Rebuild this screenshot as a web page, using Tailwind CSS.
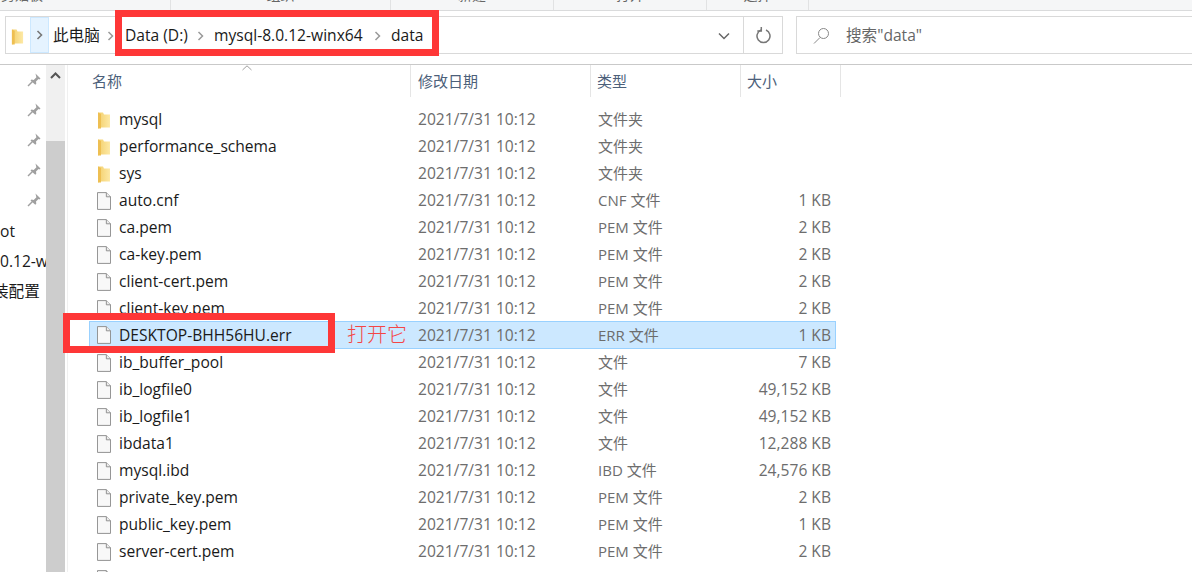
<!DOCTYPE html>
<html lang="zh-CN">
<head>
    <meta charset="UTF-8">
    <meta name="viewport" content="width=device-width, initial-scale=1.0">
    <title>data</title>
    <script src="https://cdn.jsdelivr.net/npm/@tailwindcss/browser@4"></script>
</head>
<body class="bg-white">
<svg width="0" height="0" class="absolute">
    <defs>
        <linearGradient id="fold" x1="0" y1="0" x2="1" y2="0"><stop offset="0" stop-color="#f3cf6b"/><stop offset="1" stop-color="#fde9a6"/></linearGradient>
        <symbol id="folder" viewBox="0 0 14 18">
            <path d="M1 1.500h5l1 2h6v13H3.500L1 17.500z" fill="url(#fold)"/>
            <path d="M1 1.500l3 1.500v14.500l-3 0z" fill="#eebf52"/>
        </symbol>
        <symbol id="file" viewBox="0 0 15 19">
            <path d="M.5.5h9.500l4.500 4.500v13.500H.5z" fill="#f8f8f8" stroke="#8a8a8a"/>
            <path d="M10 .5v4.500h4.500" fill="#ececec" stroke="#8a8a8a"/>
        </symbol>
        <symbol id="pin" viewBox="0 0 14 14">
            <path d="M8.500 .5l5 5-1 .9-1-.3-2.500 2.500.3 2.200-1 1L3.500 7.600l1-1 2.200.3L9.400 4.200l-.3-1z" fill="#a0a0a0"/>
            <path d="M5.500 8.500L1 13" stroke="#a0a0a0" stroke-width="1.500"/>
        </symbol>
    </defs>
</svg>
<div class="relative w-[1192px] h-[572px] overflow-hidden font-['Open_Sans','Noto_Sans_CJK_SC',sans-serif] text-[15.6px]">

    <!-- ribbon, only the bottom of the group labels is visible -->
    <div class="h-[11px] bg-[#f5f6f7] border-b border-[#dadbdc] flex items-start overflow-hidden text-[14px] leading-[18px] text-[#666]">
        <div class="w-[171px] h-[10px] shrink-0 border-r border-[#e1e2e3] pl-[1px]"><span class="block -mt-[14px]">剪贴板</span></div>
        <div class="w-[220px] h-[10px] shrink-0 border-r border-[#e1e2e3] text-center"><span class="block -mt-[14px]">组织</span></div>
        <div class="w-[163px] h-[10px] shrink-0 border-r border-[#e1e2e3] text-center"><span class="block -mt-[14px]">新建</span></div>
        <div class="w-[153px] h-[10px] shrink-0 border-r border-[#e1e2e3] text-center"><span class="block -mt-[14px]">打开</span></div>
        <div class="w-[102px] h-[10px] shrink-0 border-r border-[#e1e2e3] text-center"><span class="block -mt-[14px]">选择</span></div>
    </div>

    <!-- address + search -->
    <div class="h-[54px] bg-white border-b border-[#c9c9c9] flex items-start pt-[5px] pl-[5px]">
        <div class="w-[778px] h-[38px] border border-[#d9d9d9] flex items-center shrink-0">
            <svg class="w-[13px] h-[17px] ml-[5px] mt-[2px] shrink-0"><use href="#folder"/></svg>
            <div class="w-[19px] h-[36px] ml-[6px] bg-[#e5f3ff] border border-[#cce8ff] flex items-center justify-center shrink-0">
                <svg width="7" height="10" viewBox="0 0 7 10" fill="none" stroke="#777" stroke-width="1.600"><path d="M1.500 1l4 4-4 4"/></svg>
            </div>
            <span class="ml-[4px] pt-[2px] text-[#1a1a1a] w-[54px] shrink-0">此电脑</span>
            <svg class="mt-[2px] shrink-0" width="7" height="10" viewBox="0 0 7 10" fill="none" stroke="#999" stroke-width="1.500"><path d="M1.500 1l4 4-4 4"/></svg>
            <span class="ml-[11px] pt-[2px] text-[#1a1a1a] w-[72px] shrink-0">Data (D:)</span>
            <svg class="mt-[2px] shrink-0" width="7" height="10" viewBox="0 0 7 10" fill="none" stroke="#999" stroke-width="1.500"><path d="M1.500 1l4 4-4 4"/></svg>
            <span class="ml-[10px] pt-[2px] text-[#1a1a1a] w-[160px] shrink-0 whitespace-nowrap">mysql-8.0.12-winx64</span>
            <svg class="mt-[2px] shrink-0" width="7" height="10" viewBox="0 0 7 10" fill="none" stroke="#999" stroke-width="1.500"><path d="M1.500 1l4 4-4 4"/></svg>
            <span class="ml-[10px] pt-[2px] text-[#1a1a1a]">data</span>
            <svg class="ml-auto mr-[13px] mt-[2px] shrink-0" width="12" height="8" viewBox="0 0 12 8" fill="none" stroke="#666" stroke-width="1.500"><path d="M1 1.500l5 5 5-5"/></svg>
            <div class="w-[39px] h-[36px] border-l border-[#d9d9d9] flex items-center justify-center shrink-0">
                <svg width="15" height="17" viewBox="0 0 15 17" fill="none" stroke="#777" stroke-width="1.500"><path d="M5 3a6.500 6.500 0 1 0 5 0"/><path d="M5.300 0v4H1.300"/></svg>
            </div>
        </div>
        <div class="ml-[13px] flex-1 h-[38px] border-y border-l border-[#d9d9d9] flex items-center">
            <svg class="ml-[16px] shrink-0" width="17" height="17" viewBox="0 0 17 17" fill="none" stroke="#888" stroke-width="1"><circle cx="10.500" cy="6.500" r="5"/><path d="M7 10.500L1 16.500"/></svg>
            <span class="ml-[16px] pt-[2px] text-[#666] whitespace-nowrap">搜索"data"</span>
        </div>
    </div>

    <div class="flex h-[507px]">
        <!-- nav pane, cut off -->
        <div class="w-[46px] shrink-0 overflow-hidden text-[#1a1a1a] whitespace-nowrap">
            <div class="flex flex-col items-end pr-[5px] pt-[8px] gap-[16px]">
                <svg class="w-[14px] h-[14px]"><use href="#pin"/></svg>
                <svg class="w-[14px] h-[14px]"><use href="#pin"/></svg>
                <svg class="w-[14px] h-[14px]"><use href="#pin"/></svg>
                <svg class="w-[14px] h-[14px]"><use href="#pin"/></svg>
                <svg class="w-[14px] h-[14px]"><use href="#pin"/></svg>
            </div>
            <div class="mt-[9px] h-[30px] leading-[30px]">ot</div>
            <div class="h-[30px] leading-[30px]">0.12-w</div>
            <div class="h-[30px] leading-[30px] -ml-[7px]">装配置</div>
        </div>
        <!-- scrollbar -->
        <div class="w-[19px] shrink-0 bg-[#f0f0f0] flex flex-col">
            <div class="h-[76px] pt-[7px] flex justify-center shrink-0">
                <svg width="11" height="7" viewBox="0 0 11 7" fill="none" stroke="#555" stroke-width="2"><path d="M1 6l4.500-4.500L10 6"/></svg>
            </div>
            <div class="flex-1 bg-[#cdcdcd]"></div>
        </div>
        <div class="w-[3px] shrink-0 border-r border-[#f0f0f0]"></div>

        <!-- file list -->
        <div class="flex-1 min-w-0">
            <div class="relative h-[32px] flex text-[15px] text-[#4c607a]">
                <div class="w-[343px] h-[32px] pl-[24px] border-r border-[#e5e5e5] leading-[33px] shrink-0">名称</div>
                <div class="w-[180px] h-[32px] pl-[7px] border-r border-[#e5e5e5] leading-[33px] shrink-0">修改日期</div>
                <div class="w-[150px] h-[32px] pl-[6px] border-r border-[#e5e5e5] leading-[33px] shrink-0">类型</div>
                <div class="w-[100px] h-[32px] pl-[6px] border-r border-[#e5e5e5] leading-[33px] shrink-0">大小</div>
                <svg class="absolute left-[174px] top-0" width="10" height="6" viewBox="0 0 10 6" fill="none" stroke="#a0a0a0"><path d="M.5 5L5 .8 9.500 5"/></svg>
            </div>
            <div class="pt-[9px] ml-[21px] w-[747px] leading-[27px]">
                <div class="h-[27px] flex items-center pl-[8px]"><svg class="w-[14px] h-[18px] shrink-0"><use href="#folder"/></svg><span class="ml-[8px] w-[299px] text-[#1a1a1a] shrink-0">mysql</span><span class="w-[180px] text-[#6d6d6d] shrink-0">2021/7/31 10:12</span><span class="flex-1 text-[#6d6d6d] text-[15px]">文件夹</span></div>
                <div class="h-[27px] flex items-center pl-[8px]"><svg class="w-[14px] h-[18px] shrink-0"><use href="#folder"/></svg><span class="ml-[8px] w-[299px] text-[#1a1a1a] shrink-0">performance_schema</span><span class="w-[180px] text-[#6d6d6d] shrink-0">2021/7/31 10:12</span><span class="flex-1 text-[#6d6d6d] text-[15px]">文件夹</span></div>
                <div class="h-[27px] flex items-center pl-[8px]"><svg class="w-[14px] h-[18px] shrink-0"><use href="#folder"/></svg><span class="ml-[8px] w-[299px] text-[#1a1a1a] shrink-0">sys</span><span class="w-[180px] text-[#6d6d6d] shrink-0">2021/7/31 10:12</span><span class="flex-1 text-[#6d6d6d] text-[15px]">文件夹</span></div>
                <div class="h-[27px] flex items-center pl-[8px]"><svg class="w-[14px] h-[18px] shrink-0"><use href="#file"/></svg><span class="ml-[8px] w-[299px] text-[#1a1a1a] shrink-0">auto.cnf</span><span class="w-[180px] text-[#6d6d6d] shrink-0">2021/7/31 10:12</span><span class="flex-1 text-[#6d6d6d] text-[15px]">CNF 文件</span><span class="pr-[5px] text-[#6d6d6d]">1 KB</span></div>
                <div class="h-[27px] flex items-center pl-[8px]"><svg class="w-[14px] h-[18px] shrink-0"><use href="#file"/></svg><span class="ml-[8px] w-[299px] text-[#1a1a1a] shrink-0">ca.pem</span><span class="w-[180px] text-[#6d6d6d] shrink-0">2021/7/31 10:12</span><span class="flex-1 text-[#6d6d6d] text-[15px]">PEM 文件</span><span class="pr-[5px] text-[#6d6d6d]">2 KB</span></div>
                <div class="h-[27px] flex items-center pl-[8px]"><svg class="w-[14px] h-[18px] shrink-0"><use href="#file"/></svg><span class="ml-[8px] w-[299px] text-[#1a1a1a] shrink-0">ca-key.pem</span><span class="w-[180px] text-[#6d6d6d] shrink-0">2021/7/31 10:12</span><span class="flex-1 text-[#6d6d6d] text-[15px]">PEM 文件</span><span class="pr-[5px] text-[#6d6d6d]">2 KB</span></div>
                <div class="h-[27px] flex items-center pl-[8px]"><svg class="w-[14px] h-[18px] shrink-0"><use href="#file"/></svg><span class="ml-[8px] w-[299px] text-[#1a1a1a] shrink-0">client-cert.pem</span><span class="w-[180px] text-[#6d6d6d] shrink-0">2021/7/31 10:12</span><span class="flex-1 text-[#6d6d6d] text-[15px]">PEM 文件</span><span class="pr-[5px] text-[#6d6d6d]">2 KB</span></div>
                <div class="h-[27px] flex items-center pl-[8px]"><svg class="w-[14px] h-[18px] shrink-0"><use href="#file"/></svg><span class="ml-[8px] w-[299px] text-[#1a1a1a] shrink-0">client-key.pem</span><span class="w-[180px] text-[#6d6d6d] shrink-0">2021/7/31 10:12</span><span class="flex-1 text-[#6d6d6d] text-[15px]">PEM 文件</span><span class="pr-[5px] text-[#6d6d6d]">2 KB</span></div>
                <div class="h-[28px] -mt-px flex items-center pl-[7px] bg-[#cce8ff] border border-[#99d1ff]"><svg class="w-[14px] h-[18px] shrink-0"><use href="#file"/></svg><span class="ml-[8px] w-[299px] text-[#1a1a1a] shrink-0">DESKTOP-BHH56HU.err</span><span class="w-[180px] text-[#6d6d6d] shrink-0">2021/7/31 10:12</span><span class="flex-1 text-[#6d6d6d] text-[15px]">ERR 文件</span><span class="pr-[4px] text-[#6d6d6d]">1 KB</span></div>
                <div class="h-[27px] flex items-center pl-[8px]"><svg class="w-[14px] h-[18px] shrink-0"><use href="#file"/></svg><span class="ml-[8px] w-[299px] text-[#1a1a1a] shrink-0">ib_buffer_pool</span><span class="w-[180px] text-[#6d6d6d] shrink-0">2021/7/31 10:12</span><span class="flex-1 text-[#6d6d6d] text-[15px]">文件</span><span class="pr-[5px] text-[#6d6d6d]">7 KB</span></div>
                <div class="h-[27px] flex items-center pl-[8px]"><svg class="w-[14px] h-[18px] shrink-0"><use href="#file"/></svg><span class="ml-[8px] w-[299px] text-[#1a1a1a] shrink-0">ib_logfile0</span><span class="w-[180px] text-[#6d6d6d] shrink-0">2021/7/31 10:12</span><span class="flex-1 text-[#6d6d6d] text-[15px]">文件</span><span class="pr-[5px] text-[#6d6d6d]">49,152 KB</span></div>
                <div class="h-[27px] flex items-center pl-[8px]"><svg class="w-[14px] h-[18px] shrink-0"><use href="#file"/></svg><span class="ml-[8px] w-[299px] text-[#1a1a1a] shrink-0">ib_logfile1</span><span class="w-[180px] text-[#6d6d6d] shrink-0">2021/7/31 10:12</span><span class="flex-1 text-[#6d6d6d] text-[15px]">文件</span><span class="pr-[5px] text-[#6d6d6d]">49,152 KB</span></div>
                <div class="h-[27px] flex items-center pl-[8px]"><svg class="w-[14px] h-[18px] shrink-0"><use href="#file"/></svg><span class="ml-[8px] w-[299px] text-[#1a1a1a] shrink-0">ibdata1</span><span class="w-[180px] text-[#6d6d6d] shrink-0">2021/7/31 10:12</span><span class="flex-1 text-[#6d6d6d] text-[15px]">文件</span><span class="pr-[5px] text-[#6d6d6d]">12,288 KB</span></div>
                <div class="h-[27px] flex items-center pl-[8px]"><svg class="w-[14px] h-[18px] shrink-0"><use href="#file"/></svg><span class="ml-[8px] w-[299px] text-[#1a1a1a] shrink-0">mysql.ibd</span><span class="w-[180px] text-[#6d6d6d] shrink-0">2021/7/31 10:12</span><span class="flex-1 text-[#6d6d6d] text-[15px]">IBD 文件</span><span class="pr-[5px] text-[#6d6d6d]">24,576 KB</span></div>
                <div class="h-[27px] flex items-center pl-[8px]"><svg class="w-[14px] h-[18px] shrink-0"><use href="#file"/></svg><span class="ml-[8px] w-[299px] text-[#1a1a1a] shrink-0">private_key.pem</span><span class="w-[180px] text-[#6d6d6d] shrink-0">2021/7/31 10:12</span><span class="flex-1 text-[#6d6d6d] text-[15px]">PEM 文件</span><span class="pr-[5px] text-[#6d6d6d]">2 KB</span></div>
                <div class="h-[27px] flex items-center pl-[8px]"><svg class="w-[14px] h-[18px] shrink-0"><use href="#file"/></svg><span class="ml-[8px] w-[299px] text-[#1a1a1a] shrink-0">public_key.pem</span><span class="w-[180px] text-[#6d6d6d] shrink-0">2021/7/31 10:12</span><span class="flex-1 text-[#6d6d6d] text-[15px]">PEM 文件</span><span class="pr-[5px] text-[#6d6d6d]">1 KB</span></div>
                <div class="h-[27px] flex items-center pl-[8px]"><svg class="w-[14px] h-[18px] shrink-0"><use href="#file"/></svg><span class="ml-[8px] w-[299px] text-[#1a1a1a] shrink-0">server-cert.pem</span><span class="w-[180px] text-[#6d6d6d] shrink-0">2021/7/31 10:12</span><span class="flex-1 text-[#6d6d6d] text-[15px]">PEM 文件</span><span class="pr-[5px] text-[#6d6d6d]">2 KB</span></div>
                <div class="h-[27px] flex items-center pl-[8px]"><svg class="w-[14px] h-[18px] shrink-0"><use href="#file"/></svg></div>
            </div>
        </div>
    </div>

    <!-- red annotations on top of the screenshot -->
    <div class="absolute left-[115px] top-[10px] w-[324px] h-[46px] border-[7px] border-[#fe3737]"></div>
    <div class="absolute left-[63px] top-[313px] w-[272px] h-[40px] border-[7px] border-[#fe3737]"></div>
    <div class="absolute left-[347px] top-[321px] text-[20px] leading-[28px] text-[#f44646] font-light whitespace-nowrap">打开它</div>
</div>
</body>
</html>
